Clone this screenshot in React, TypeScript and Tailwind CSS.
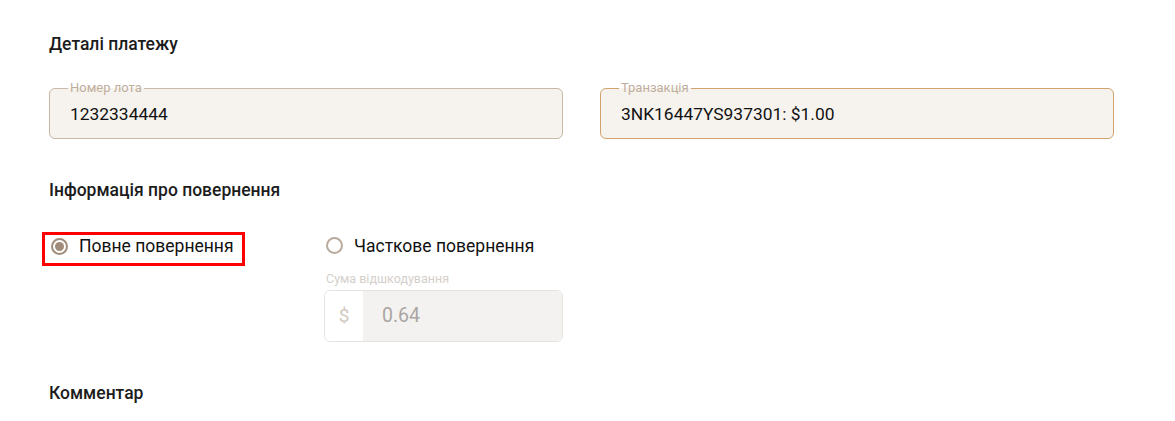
import React from "react";

function Field({ label, value, border }: { label: string; value: string; border: string }) {
  return (
    <fieldset className={`w-[514px] h-[58px] rounded-[6px] border bg-[#f6f3ee] pl-[20px] pr-[14px] pb-[12px] m-0 ${border}`}>
      <legend className="ml-[-2px] px-[2px] text-[13px] leading-[14px] text-[#bfae9c]">{label}</legend>
      <div className="mt-[7px] text-[17.4px] leading-[24px] text-[#111]">{value}</div>
    </fieldset>
  );
}

export default function App() {
  return (
    <div className="w-[1175px] h-[421px] bg-white pl-[49px] pt-[32px] overflow-hidden" style={{ fontFamily: "Roboto, 'Noto Sans', sans-serif" }}>
      <h2 className="text-[17.5px] leading-[24px] font-medium text-[#1c1c1c]">Деталі платежу</h2>
      <div className="flex gap-[37px] mt-[25px]">
        <Field label="Номер лота" value="1232334444" border="border-[#c9b8a6]" />
        <Field label="Транзакція" value="3NK16447YS937301: $1.00" border="border-[#d1a46f]" />
      </div>
      <h2 className="mt-[39px] text-[17.5px] leading-[24px] font-medium text-[#1c1c1c]">Інформація про повернення</h2>
      <div className="flex mt-[30px] ml-[-7px]">
        <div className="w-[282px]">
          <label className="inline-flex items-center h-[34px] w-[203px] border-[3px] border-[#ff0000] pl-[6px] pb-[6px] pt-0">
            <span className="w-[17px] h-[17px] rounded-full border-2 border-[#a08c78] flex items-center justify-center">
              <span className="w-[9px] h-[9px] rounded-full bg-[#a08c78]" />
            </span>
            <span className="ml-[11px] text-[17.5px] leading-[24px] text-[#111]">Повне повернення</span>
          </label>
        </div>
        <div className="flex flex-col">
          <label className="inline-flex items-center h-[34px] pl-[2px] pb-[7px] pt-0">
            <span className="w-[17px] h-[17px] rounded-full border-2 border-[#b8aa9c]" />
            <span className="ml-[11px] text-[17.5px] leading-[24px] text-[#111]">Часткове повернення</span>
          </label>
          <div className="mt-[6px] pl-[2px] text-[12.5px] leading-[14px] text-[#d4cfca]">Сума відшкодування</div>
          <div className="mt-[4px] flex w-[239px] h-[52px] rounded-[6px] border border-[#e6e3df] overflow-hidden">
            <div className="w-[38px] bg-white flex items-center justify-center text-[19px] text-[#d2c8be]">$</div>
            <div className="flex-1 bg-[#f3f2f0] flex items-center pl-[19px] text-[19.5px] text-[#aaa6a2]">0.64</div>
          </div>
        </div>
      </div>
      <h2 className="mt-[39px] text-[17.5px] leading-[24px] font-medium text-[#1c1c1c]">Комментар</h2>
    </div>
  );
}
